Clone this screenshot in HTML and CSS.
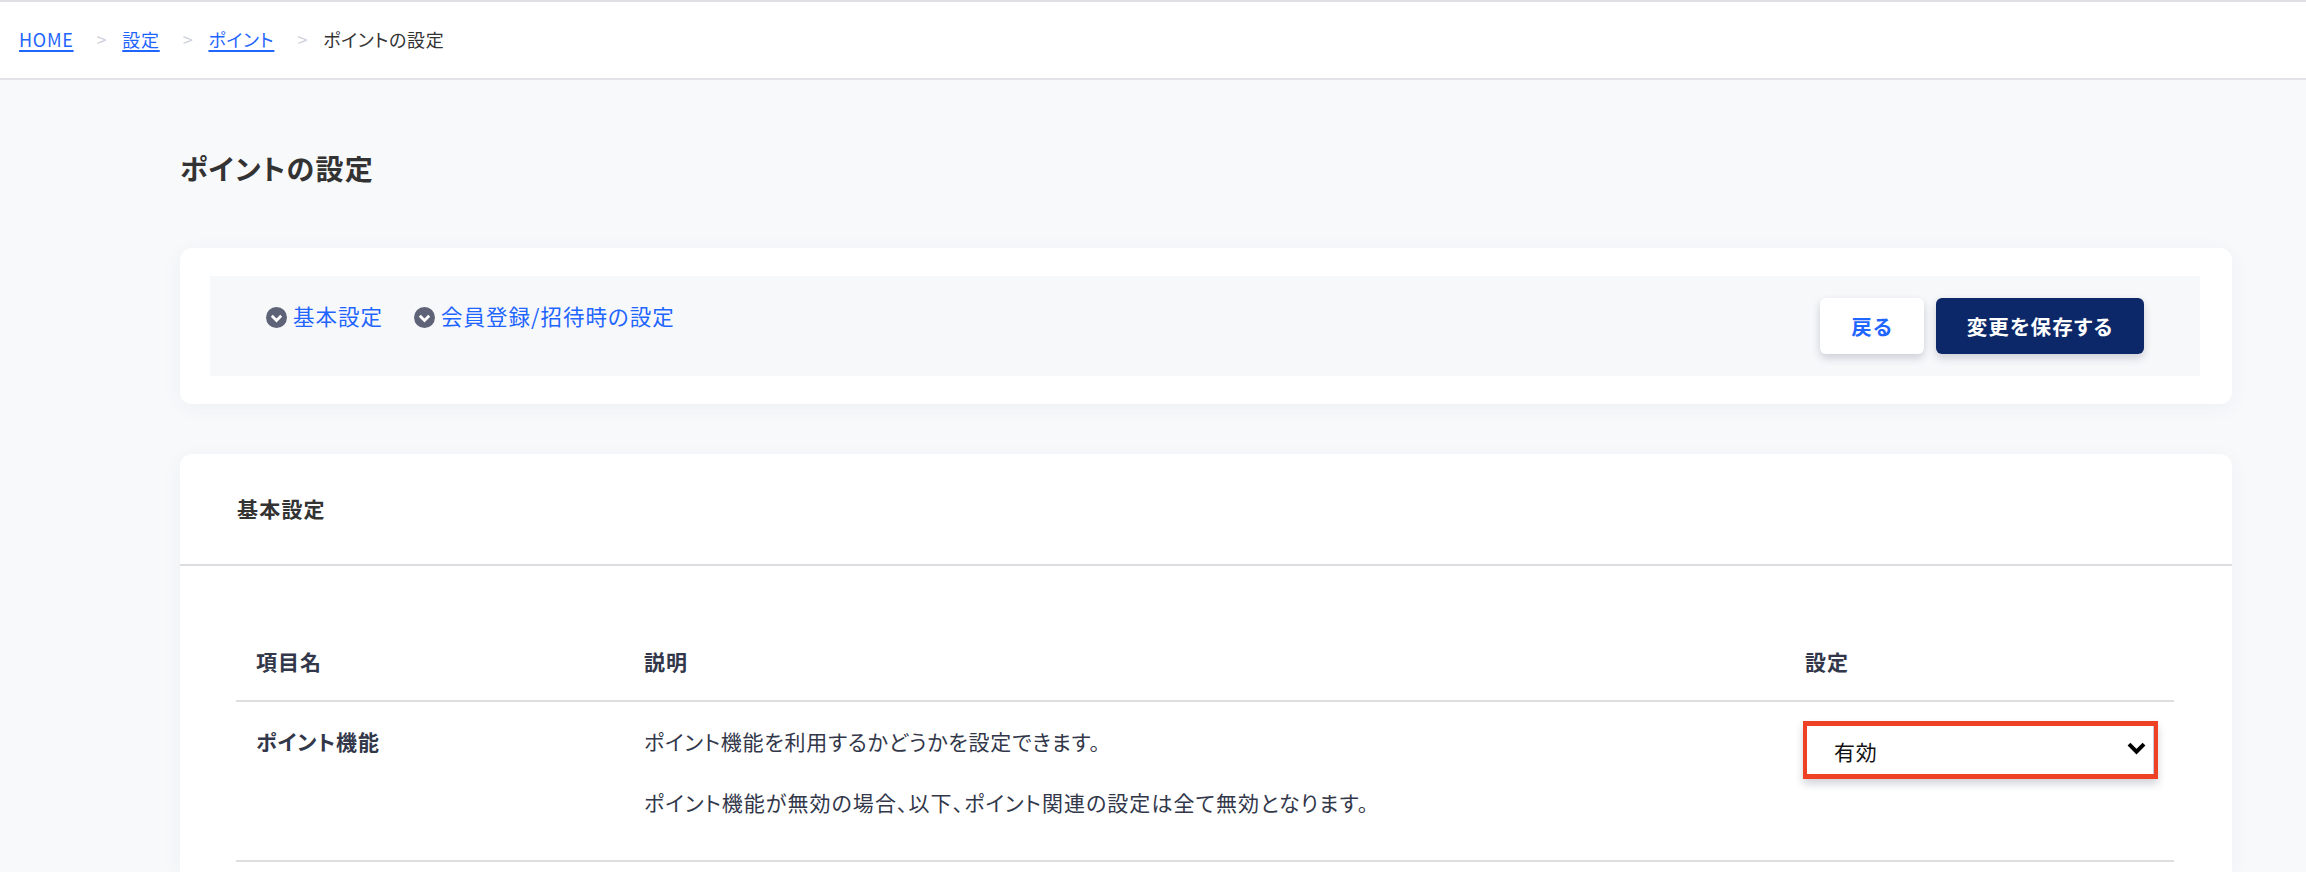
FILE: index.html
```html
<!DOCTYPE html>
<html lang="ja">
<head>
<meta charset="utf-8">
<title>ポイントの設定</title>
<link rel="stylesheet" href="styles.css">
</head>
<body>
<nav class="crumbs">
  <a href="#">HOME</a><span class="sep">&gt;</span>
  <a href="#">設定</a><span class="sep">&gt;</span>
  <a href="#">ポイント</a><span class="sep">&gt;</span>
  <span class="current">ポイントの設定</span>
</nav>
<main class="page">
  <h1 class="title">ポイントの設定</h1>
  <section class="card toolbar-card">
    <div class="toolbar">
      <div class="anchors">
        <a class="anchor" href="#"><svg class="anchor-icon" viewBox="0 0 21 21"><circle cx="10.5" cy="10.5" r="10.5" fill="#5f6378"/><path d="M5.8 8.8l4.7 4.7 4.7-4.7" fill="none" stroke="#fff" stroke-width="2.8"/></svg>基本設定</a>
        <a class="anchor" href="#"><svg class="anchor-icon" viewBox="0 0 21 21"><circle cx="10.5" cy="10.5" r="10.5" fill="#5f6378"/><path d="M5.8 8.8l4.7 4.7 4.7-4.7" fill="none" stroke="#fff" stroke-width="2.8"/></svg>会員登録/招待時の設定</a>
      </div>
      <div class="actions">
        <button class="btn btn-back">戻る</button>
        <button class="btn btn-save">変更を保存する</button>
      </div>
    </div>
  </section>
  <section class="card settings">
    <h2 class="settings-title">基本設定</h2>
    <div class="table-wrap">
      <div class="row head">
        <div class="cell">項目名</div>
        <div class="cell">説明</div>
        <div class="cell">設定</div>
      </div>
      <div class="row body">
        <div class="cell name">ポイント機能</div>
        <div class="cell desc">
          <p>ポイント機能を利用するかどうかを設定できます。</p>
          <p class="wide">ポイント機能が無効の場合、以下、ポイント関連の設定は全て無効となります。</p>
        </div>
        <div class="cell">
          <div class="select">
            <span>有効</span>
            <svg class="chevron" viewBox="0 0 19 13"><path d="M2 2.2l7.5 7.5L17 2.2" fill="none" stroke="#000" stroke-width="4"/></svg>
          </div>
        </div>
      </div>
    </div>
  </section>
</main>
</body>
</html>
```
FILE: styles.css
```css
* { box-sizing: border-box; }
html, body { margin: 0; height: 872px; overflow: hidden; }
body {
  background: #f8f9fb;
  color: #32374a;
  font-family: "Noto Sans CJK JP", "Noto Sans", sans-serif;
  font-feature-settings: "palt";
}
.crumbs {
  height: 80px;
  background: #fff;
  border-top: 2px solid #dfe0e3;
  border-bottom: 2px solid #e2e3e8;
  padding: 0 0 3px 19px;
  display: flex;
  align-items: center;
  font-size: 18px;
  letter-spacing: 0.72px;
}
.crumbs a {
  color: #1f65ff;
  text-decoration: underline;
  text-decoration-thickness: 2px;
  text-underline-offset: 3px;
}
.crumbs .sep { color: #cfd2dc; margin: 0 15px 0 23px; }
.crumbs .current { color: #333; }
.page { padding: 0 74px 0 180px; }
.title {
  margin: 0;
  padding: 68px 0 0;
  height: 168px;
  font-size: 28px;
  line-height: 40px;
  font-weight: 700;
  letter-spacing: 1.3px;
  color: #333;
}
.card {
  background: #fff;
  border-radius: 12px;
  box-shadow: 0 4px 20px rgba(40, 50, 80, 0.05);
}
.toolbar-card { height: 156px; padding: 28px 32px 28px 30px; margin-bottom: 50px; }
.toolbar {
  height: 100px;
  background: #f7f8fa;
  display: flex;
  justify-content: space-between;
  padding: 22px 56px 22px 56px;
}
.anchors { display: flex; gap: 31px; padding-top: 3px; }
.anchor {
  display: flex;
  gap: 6px;
  align-items: flex-start;
  color: #1f65ff;
  text-decoration: none;
  font-size: 21.5px;
  letter-spacing: 1px;
  line-height: 30px;
}
.anchor-icon { width: 21px; height: 21px; margin-top: 6px; }
.actions { display: flex; gap: 12px; }
.btn {
  height: 56px;
  border: 0;
  border-radius: 6px;
  font: inherit;
  font-size: 20.5px;
  letter-spacing: 1.1px;
  font-weight: 700;
  box-shadow: 0 4px 8px rgba(30, 40, 70, 0.2);
}
.btn-back { width: 104px; background: #fff; color: #1f65ff; }
.btn-save { width: 208px; background: #0c2869; color: #fff; }
.settings { height: 418px; border-radius: 12px 12px 0 0; }
.settings-title {
  margin: 0;
  height: 112px;
  padding: 39px 56px 0 57px;
  font-size: 21px;
  letter-spacing: 1.2px;
  line-height: 30px;
  font-weight: 700;
  color: #333;
  border-bottom: 2px solid #dcdde1;
}
.table-wrap { padding: 66px 58px 0 56px; }
.row {
  display: grid;
  grid-template-columns: 388px 1161px 1fr;
  border-bottom: 2px solid #dedede;
  padding-left: 20px;
}
.row.head { height: 70px; font-size: 21px; letter-spacing: 1px; line-height: 30px; font-weight: 700; padding-top: 14px; }
.row.body { height: 160px; padding-top: 19px; font-size: 21px; letter-spacing: 0.8px; }
.cell.name { font-weight: 700; line-height: 40px; letter-spacing: 1px; }
.desc p { margin: 0 0 20.5px; line-height: 40px; }
.desc p.wide { letter-spacing: 1.05px; }
.select {
  width: 355px;
  height: 58px;
  margin-left: -2px;
  border: 5px solid #ef4123;
  border-left-width: 4.5px;
  border-right-width: 4.5px;
  background: #fff;
  box-shadow: 0 5px 8px rgba(30, 40, 70, 0.2), inset -1px 0 0 #c5c8d8;
  display: flex;
  align-items: center;
  justify-content: space-between;
  padding: 0 8.5px 0 27px;
  color: #111;
}
.select span { padding-top: 1px; }
.chevron { width: 19px; height: 13px; margin-top: -4px; }
```
